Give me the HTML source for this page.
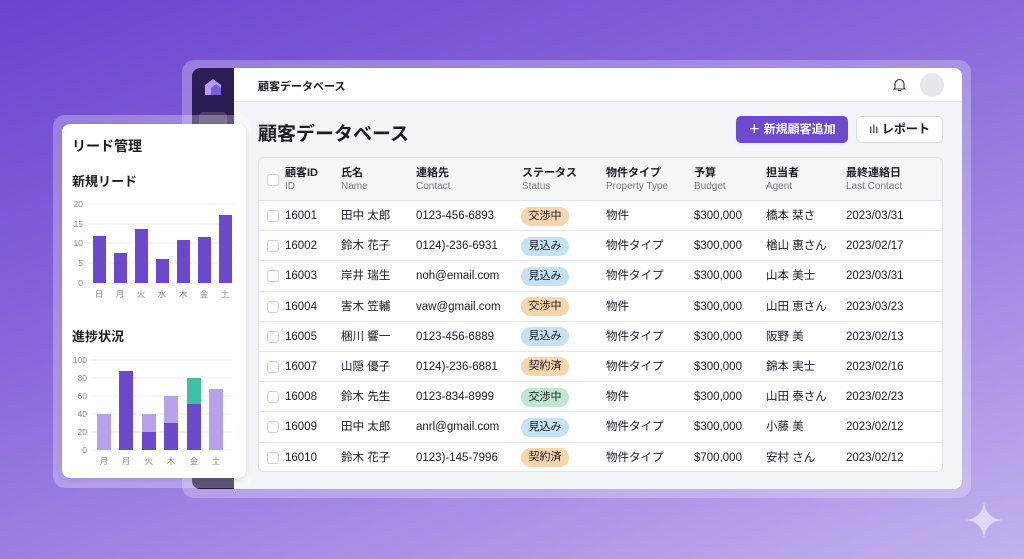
<!DOCTYPE html>
<html><head><meta charset="utf-8"><style>
*{margin:0;padding:0;box-sizing:border-box}
body{width:1024px;height:559px;overflow:hidden;position:relative;font-family:"Liberation Sans","Noto Sans CJK JP",sans-serif;color:#1b1b22;
background:linear-gradient(160deg,#6a44cf 0%,#8a68db 40%,#a892e6 75%,#c2b2ee 100%)}
.frame{position:absolute;left:182px;top:60px;width:789px;height:438px;border-radius:12px;background:rgba(255,255,255,.25)}
.win{position:absolute;left:192px;top:68px;width:770px;height:421px;border-radius:8px;overflow:hidden;background:#f3f4f7}
.side{position:absolute;left:0;top:0;width:42px;height:421px;background:linear-gradient(#2d1d55,#231646)}
.top{position:absolute;left:42px;top:0;right:0;height:34px;background:#fff;border-bottom:1px solid #e6e6ec}
.top .t{position:absolute;left:24px;top:10px;font-size:11px;font-weight:bold}
.avatar{position:absolute;right:18px;top:5px;width:24px;height:24px;border-radius:50%;background:#e6e6ec}
h1{position:absolute;left:66px;top:51px;font-size:19px;font-weight:bold}
.btn1{position:absolute;left:544px;top:48px;width:112px;height:27px;border-radius:5px;background:#6e4bcc;color:#fff;font-size:12px;font-weight:bold;line-height:27px;text-align:center}
.btn2{position:absolute;left:664px;top:48px;width:87px;height:27px;border-radius:5px;background:#fff;border:1px solid #dcdce4;font-size:12px;font-weight:bold;line-height:25px;text-align:center}
.tbl{position:absolute;left:66px;top:89px;width:685px;height:315px;background:#fff;border:1px solid #e1e2e8;border-radius:6px;overflow:hidden}
.hd{height:43px;background:#f5f6f8;border-bottom:1px solid #e1e2e8;position:relative}
.row{height:30.2px;border-bottom:1px solid #e6e6ec;position:relative;font-size:11.5px}
.c{position:absolute;white-space:nowrap}
.hd .c{top:8px;font-size:11px;font-weight:bold;line-height:14px}
.hd .c span{display:block;font-weight:normal;color:#777;font-size:10px}
.row .c{top:0;line-height:30px}
.cb{position:absolute;left:8px;width:12px;height:12px;border:1px solid #cfcfd6;border-radius:3px;background:#fff}
.pill{position:absolute;left:262px;top:5.5px;width:48px;height:19px;border-radius:10px;font-size:11px;text-align:center;line-height:19px}
.o{background:#f8d5ad}.b{background:#c5e2f4}.g{background:#bfe6cf}
.card0{position:absolute;left:53px;top:115px;width:198px;height:373px;border-radius:12px;background:rgba(255,255,255,.28)}
.card{position:absolute;left:62px;top:124px;width:184px;height:354px;border-radius:8px;background:#fff;box-shadow:0 2px 8px rgba(0,0,0,.1)}
.card .h{position:absolute;font-weight:bold}
</style></head><body>
<div class="frame"></div>
<div class="win">
 <div class="side">
  <svg style="position:absolute;left:11px;top:10px" width="20" height="18" viewBox="0 0 20 18"><path d="M2 17V7L10 1L18 7V17Z" fill="#b79cf2"/><path d="M8 17V10L13 6L18 10V17Z" fill="#7c5ae0"/></svg>
  <div style="position:absolute;left:7px;top:44px;width:28px;height:14px;border-radius:4px 4px 0 0;background:rgba(255,255,255,.15)"></div>
 </div>
 <div class="top"><div class="t">顧客データベース</div>
  <svg style="position:absolute;right:56px;top:10px" width="13" height="14" viewBox="0 0 13 14"><path d="M2 10V6a4.5 4.5 0 0 1 9 0v4l1 1H1Z M5 12.5h3" fill="none" stroke="#333" stroke-width="1.1"/></svg>
  <div class="avatar"></div></div>
 <h1>顧客データベース</h1>
 <div class="btn1">＋ 新規顧客追加</div>
 <div class="btn2"><span style="font-weight:normal">ılı</span> レポート</div>
 <div class="tbl">
  <div class="hd"><div class="cb" style="top:16px"></div>
   <div class="c" style="left:26px">顧客ID<span>ID</span></div>
   <div class="c" style="left:82px">氏名<span>Name</span></div>
   <div class="c" style="left:157px">連絡先<span>Contact</span></div>
   <div class="c" style="left:263px">ステータス<span>Status</span></div>
   <div class="c" style="left:347px">物件タイプ<span>Property Type</span></div>
   <div class="c" style="left:435px">予算<span>Budget</span></div>
   <div class="c" style="left:507px">担当者<span>Agent</span></div>
   <div class="c" style="left:587px">最終連絡日<span>Last Contact</span></div>
  </div>
  <div class="row"><div class="cb" style="top:9px"></div><div class="c" style="left:26px">16001</div><div class="c" style="left:82px">田中 太郎</div><div class="c" style="left:157px">0123-456-6893</div><div class="pill o">交渉中</div><div class="c" style="left:347px">物件</div><div class="c" style="left:435px">$300,000</div><div class="c" style="left:507px">橋本 栞さ</div><div class="c" style="left:587px">2023/03/31</div></div>
  <div class="row"><div class="cb" style="top:9px"></div><div class="c" style="left:26px">16002</div><div class="c" style="left:82px">鈴木 花子</div><div class="c" style="left:157px">0124)-236-6931</div><div class="pill b">見込み</div><div class="c" style="left:347px">物件タイプ</div><div class="c" style="left:435px">$300,000</div><div class="c" style="left:507px">楢山 惠さん</div><div class="c" style="left:587px">2023/02/17</div></div>
  <div class="row"><div class="cb" style="top:9px"></div><div class="c" style="left:26px">16003</div><div class="c" style="left:82px">岸井 瑞生</div><div class="c" style="left:157px">noh@email.com</div><div class="pill b">見込み</div><div class="c" style="left:347px">物件タイプ</div><div class="c" style="left:435px">$300,000</div><div class="c" style="left:507px">山本 美士</div><div class="c" style="left:587px">2023/03/31</div></div>
  <div class="row"><div class="cb" style="top:9px"></div><div class="c" style="left:26px">16004</div><div class="c" style="left:82px">害木 笠輔</div><div class="c" style="left:157px">vaw@gmail.com</div><div class="pill o">交渉中</div><div class="c" style="left:347px">物件</div><div class="c" style="left:435px">$300,000</div><div class="c" style="left:507px">山田 恵さん</div><div class="c" style="left:587px">2023/03/23</div></div>
  <div class="row"><div class="cb" style="top:9px"></div><div class="c" style="left:26px">16005</div><div class="c" style="left:82px">梱川 響一</div><div class="c" style="left:157px">0123-456-6889</div><div class="pill b">見込み</div><div class="c" style="left:347px">物件タイプ</div><div class="c" style="left:435px">$300,000</div><div class="c" style="left:507px">阪野 美</div><div class="c" style="left:587px">2023/02/13</div></div>
  <div class="row"><div class="cb" style="top:9px"></div><div class="c" style="left:26px">16007</div><div class="c" style="left:82px">山隠 優子</div><div class="c" style="left:157px">0124)-236-6881</div><div class="pill o">契約済</div><div class="c" style="left:347px">物件タイプ</div><div class="c" style="left:435px">$300,000</div><div class="c" style="left:507px">錦本 実士</div><div class="c" style="left:587px">2023/02/16</div></div>
  <div class="row"><div class="cb" style="top:9px"></div><div class="c" style="left:26px">16008</div><div class="c" style="left:82px">鈴木 先生</div><div class="c" style="left:157px">0123-834-8999</div><div class="pill g">交渉中</div><div class="c" style="left:347px">物件</div><div class="c" style="left:435px">$300,000</div><div class="c" style="left:507px">山田 泰さん</div><div class="c" style="left:587px">2023/02/23</div></div>
  <div class="row"><div class="cb" style="top:9px"></div><div class="c" style="left:26px">16009</div><div class="c" style="left:82px">田中 太郎</div><div class="c" style="left:157px">anrl@gmail.com</div><div class="pill b">見込み</div><div class="c" style="left:347px">物件タイプ</div><div class="c" style="left:435px">$300,000</div><div class="c" style="left:507px">小藤 美</div><div class="c" style="left:587px">2023/02/12</div></div>
  <div class="row" style="border-bottom:none"><div class="cb" style="top:9px"></div><div class="c" style="left:26px">16010</div><div class="c" style="left:82px">鈴木 花子</div><div class="c" style="left:157px">0123)-145-7996</div><div class="pill o">契約済</div><div class="c" style="left:347px">物件タイプ</div><div class="c" style="left:435px">$700,000</div><div class="c" style="left:507px">安村 さん</div><div class="c" style="left:587px">2023/02/12</div></div>
 </div>
</div>
<svg style="position:absolute;left:964px;top:500px" width="40" height="40" viewBox="0 0 40 40"><path d="M20 2Q22 18 38 20Q22 22 20 38Q18 22 2 20Q18 18 20 2Z" fill="rgba(255,255,255,.55)"/></svg>
<div class="card0"></div>
<div class="card">
 <div class="h" style="left:10px;top:12px;font-size:14px">リード管理</div>
 <div class="h" style="left:10px;top:47px;font-size:13px">新規リード</div>
 <div class="h" style="left:10px;top:202px;font-size:13px">進捗状況</div>
 <svg style="position:absolute;left:0;top:0" width="184" height="354" font-family="Liberation Sans,Noto Sans CJK JP,sans-serif" font-size="8.5" fill="#888">
  <g stroke="#eeeef3" stroke-width="1"><line x1="26" x2="172" y1="80" y2="80"/><line x1="26" x2="172" y1="100" y2="100"/><line x1="26" x2="172" y1="119" y2="119"/><line x1="26" x2="172" y1="139" y2="139"/><line x1="26" x2="172" y1="159" y2="159"/></g>
  <g text-anchor="end"><text x="21" y="83">20</text><text x="21" y="103">15</text><text x="21" y="122">10</text><text x="21" y="142">5</text><text x="21" y="162">0</text></g>
  <g fill="#6b48cc"><rect x="31" y="112" width="13" height="47"/><rect x="52" y="129" width="13" height="30"/><rect x="73" y="105" width="13" height="54"/><rect x="94" y="135" width="13" height="24"/><rect x="115" y="116" width="13" height="43"/><rect x="136" y="113" width="13" height="46"/><rect x="157" y="91" width="13" height="68"/></g>
  <g text-anchor="middle"><text x="37" y="173">日</text><text x="58" y="173">月</text><text x="79" y="173">火</text><text x="100" y="173">水</text><text x="121" y="173">木</text><text x="142" y="173">金</text><text x="163" y="173">土</text></g>
  <g stroke="#eeeef3"><line x1="30" x2="170" y1="236" y2="236"/><line x1="30" x2="170" y1="254" y2="254"/><line x1="30" x2="170" y1="272" y2="272"/><line x1="30" x2="170" y1="290" y2="290"/><line x1="30" x2="170" y1="308" y2="308"/><line x1="30" x2="170" y1="326" y2="326"/></g>
  <g text-anchor="end"><text x="25" y="239">100</text><text x="25" y="257">80</text><text x="25" y="275">60</text><text x="25" y="293">40</text><text x="25" y="311">20</text><text x="25" y="329">0</text></g>
  <g fill="#b7a2ea"><rect x="35" y="290" width="14" height="36"/><rect x="80" y="290" width="14" height="18"/><rect x="102" y="272" width="14" height="27"/><rect x="147" y="265" width="14" height="61"/></g>
  <g fill="#6b48cc"><rect x="57" y="247" width="14" height="79"/><rect x="80" y="308" width="14" height="18"/><rect x="102" y="299" width="14" height="27"/><rect x="125" y="280" width="14" height="46"/></g>
  <rect x="125" y="254" width="14" height="26" fill="#3fbfa6"/>
  <g text-anchor="middle"><text x="42" y="340">月</text><text x="64" y="340">月</text><text x="87" y="340">火</text><text x="109" y="340">木</text><text x="132" y="340">金</text><text x="154" y="340">土</text></g>
 </svg>
</div>
</body></html>
